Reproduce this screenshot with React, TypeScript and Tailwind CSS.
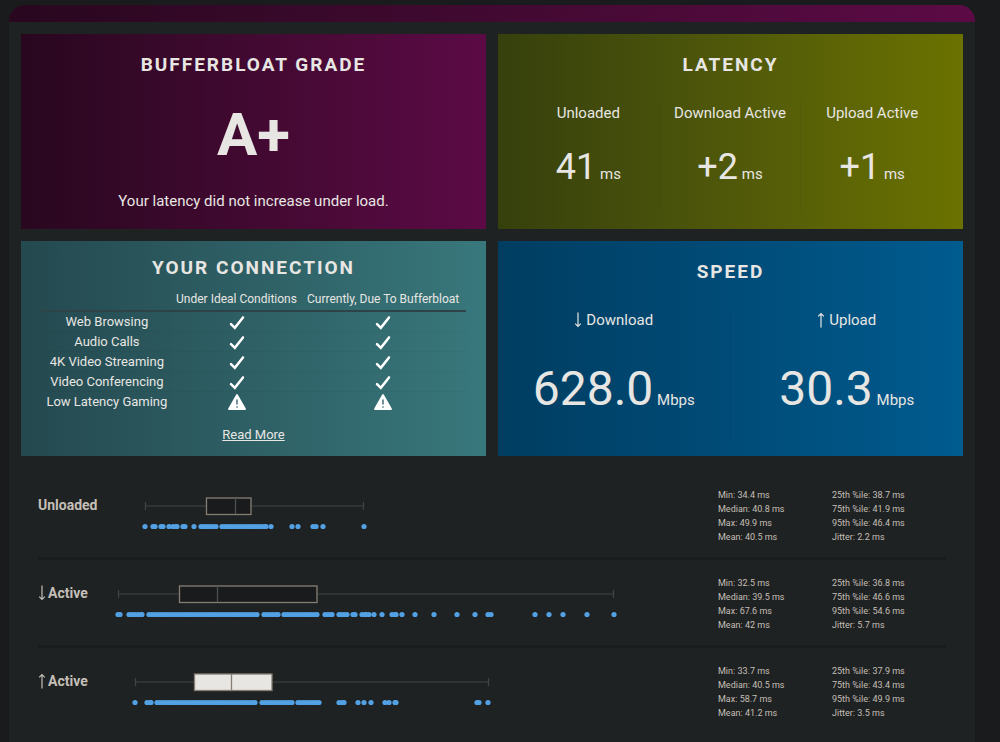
import type { ReactNode } from "react";

type Run = [number, number];

type Sample = {
  label: string;
  arrow?: "up" | "down";
  // chart coordinates
  whiskers: Run;
  box: Run;
  median: number;
  filled?: boolean;
  dots: Run[];
  stats: string[][];
};

const samples: Sample[] = [
  {
    label: "Unloaded",
    whiskers: [35, 253],
    box: [96, 141],
    median: 125,
    dots: [
      [35, 35], [43, 45], [51, 53], [59, 59], [63, 67], [73, 75], [84, 84],
      [91, 106], [112, 156], [161, 161], [182, 182], [188, 188], [203, 206],
      [213, 213], [254, 254],
    ],
    stats: [
      ["Min: 34.4 ms", "Median: 40.8 ms", "Max: 49.9 ms", "Mean: 40.5 ms"],
      ["25th %ile: 38.7 ms", "75th %ile: 41.9 ms", "95th %ile: 46.4 ms", "Jitter: 2.2 ms"],
    ],
  },
  {
    label: "Active",
    arrow: "down",
    whiskers: [8, 503],
    box: [69, 207],
    median: 107,
    dots: [
      [8, 10], [19, 32], [39, 147], [154, 168], [174, 207], [215, 222],
      [229, 231], [234, 237], [243, 245], [252, 256], [259, 259], [264, 264],
      [272, 272], [282, 286], [292, 292], [305, 305], [324, 324], [347, 347],
      [365, 365], [378, 381], [425, 425], [439, 439], [453, 453], [477, 477],
      [504, 504],
    ],
    stats: [
      ["Min: 32.5 ms", "Median: 39.5 ms", "Max: 67.6 ms", "Mean: 42 ms"],
      ["25th %ile: 36.8 ms", "75th %ile: 46.6 ms", "95th %ile: 54.6 ms", "Jitter: 5.7 ms"],
    ],
  },
  {
    label: "Active",
    arrow: "up",
    whiskers: [25, 378],
    box: [84, 162],
    median: 121,
    filled: true,
    dots: [
      [25, 25], [37, 41], [47, 145], [152, 182], [188, 188], [191, 209],
      [229, 234], [248, 248], [254, 254], [261, 261], [275, 275], [279, 279],
      [285, 286], [367, 369], [378, 378],
    ],
    stats: [
      ["Min: 33.7 ms", "Median: 40.5 ms", "Max: 58.7 ms", "Mean: 41.2 ms"],
      ["25th %ile: 37.9 ms", "75th %ile: 43.4 ms", "95th %ile: 49.9 ms", "Jitter: 3.5 ms"],
    ],
  },
];

const activities = [
  { name: "Web Browsing", ok: true },
  { name: "Audio Calls", ok: true },
  { name: "4K Video Streaming", ok: true },
  { name: "Video Conferencing", ok: true },
  { name: "Low Latency Gaming", ok: false },
];

function expand(runs: Run[]) {
  const xs: number[] = [];
  for (const [from, to] of runs) {
    for (let x = from; x < to; x += 3) xs.push(x);
    xs.push(to);
  }
  return xs;
}

function Arrow({ dir }: { dir: "up" | "down" }) {
  return (
    <svg
      viewBox="0 0 8 16"
      className={dir === "up" ? "h-4 w-2 shrink-0" : "h-4 w-2 shrink-0 rotate-180"}
      fill="none"
      stroke="currentColor"
      strokeWidth="1.2"
      aria-hidden="true"
    >
      <path d="M4 15.5V2M1.2 4.4 4 1.6l2.8 2.8" />
    </svg>
  );
}

function Check() {
  return (
    <svg
      viewBox="0 0 18 16"
      className="mx-auto h-4 w-[18px]"
      fill="none"
      stroke="#fff"
      strokeWidth="2.5"
      strokeLinecap="round"
      role="img"
      aria-label="Yes"
    >
      <path d="M3 10.2 6.8 13.8 15 3.4" />
    </svg>
  );
}

function Warning() {
  return (
    <svg viewBox="0 0 18 16" className="mx-auto h-4 w-[18px]" role="img" aria-label="Warning">
      <path
        d="M9 1 17 15H1Z"
        fill="#fff"
        stroke="#fff"
        strokeWidth="1.8"
        strokeLinejoin="round"
      />
      <path d="M9 5.6v5" stroke="#2b5a5f" strokeWidth="1.3" />
      <circle cx="9" cy="13" r="0.8" fill="#2b5a5f" />
    </svg>
  );
}

function Card({ className, title, children }: { className: string; title: string; children: ReactNode }) {
  return (
    <section className={`bg-linear-to-r text-center ${className}`}>
      <h2 className="text-[19px] leading-5 font-bold tracking-[2px] uppercase">{title}</h2>
      {children}
    </section>
  );
}

function BoxPlot({ sample }: { sample: Sample }) {
  const [min, max] = sample.whiskers;
  const [q1, q3] = sample.box;
  return (
    <svg viewBox="0 0 608 56" className="w-full" role="img" aria-label={`${sample.label} latency`}>
      <path
        d={`M${min} 18H${max}M${min}.5 14v8M${max}.5 14v8`}
        stroke="#414545"
        strokeWidth="1.2"
      />
      <rect
        x={q1 + 0.5}
        y="10"
        width={q3 - q1 - 0.5}
        height="16.5"
        fill={sample.filled ? "#e8e6e3" : "#1a1b1d"}
        stroke="#857e74"
        strokeWidth="1.3"
      />
      <path
        d={`M${sample.median}.5 10v16`}
        stroke={sample.filled ? "#857e74" : "#4b5151"}
        strokeWidth="1.3"
      />
      {expand(sample.dots).map((x) => (
        <circle key={x} cx={x} cy="38.5" r="2.6" fill="#52a1e5" />
      ))}
    </svg>
  );
}

export default function App() {
  return (
    <div className="flex min-h-screen flex-col bg-[#1a1b1d] pt-[5px] pr-[25px] pl-[9px] font-[Roboto,sans-serif] text-[#e8e6e3]">
      <main className="flex-1 overflow-hidden rounded-t-2xl bg-[#1f2222]">
        <div className="h-[17px] bg-linear-to-r from-[#29071f] to-[#5c0a45]" />

        <div className="grid grid-cols-2 gap-3 px-3 pt-3">
          <Card title="Bufferbloat Grade" className="from-[#29071f] to-[#5c0a45] px-5 pt-[21px] pb-4">
            <p className="mt-[30px] text-[60px] leading-[60px] font-bold">A+</p>
            <p className="mt-6 text-[15px] leading-6">Your latency did not increase under load.</p>
          </Card>

          <Card title="Latency" className="from-[#36400c] to-[#6b7200] px-5 pt-[21px] pb-4">
            <dl className="mt-7 grid grid-cols-3 divide-x divide-black/5">
              {[
                ["Unloaded", "41"],
                ["Download Active", "+2"],
                ["Upload Active", "+1"],
              ].map(([label, value]) => (
                <div key={label} className="pb-4 whitespace-nowrap">
                  <dt className="text-[15px] leading-5">{label}</dt>
                  <dd className="mt-6 text-[15px] leading-10">
                    <span className="text-4xl leading-10">{value}</span> ms
                  </dd>
                </div>
              ))}
            </dl>
          </Card>

          <Card title="Your Connection" className="from-[#24494f] to-[#38787c] px-5 pt-[17px] pb-2">
            <table className="mt-[9px] w-full table-fixed text-[13px]">
              <colgroup>
                <col className="w-[31%]" />
                <col className="w-[30%]" />
                <col className="w-[39%]" />
              </colgroup>
              <thead>
                <tr className="border-b-2 border-[#2e4347] text-xs whitespace-nowrap">
                  <td />
                  <th scope="col" className="h-6 p-0 font-normal">Under Ideal Conditions</th>
                  <th scope="col" className="h-6 p-0 font-normal">Currently, Due To Bufferbloat</th>
                </tr>
              </thead>
              <tbody>
                {activities.map((activity) => (
                  <tr key={activity.name} className="border-b border-black/3 last:border-0">
                    <th scope="row" className="p-0 leading-[19px] font-normal whitespace-nowrap">
                      {activity.name}
                    </th>
                    <td className="p-0">{activity.ok ? <Check /> : <Warning />}</td>
                    <td className="p-0">{activity.ok ? <Check /> : <Warning />}</td>
                  </tr>
                ))}
              </tbody>
            </table>
            <a href="#details" className="mx-auto mt-[14px] block w-fit text-[13px] leading-5 underline">
              Read More
            </a>
          </Card>

          <Card title="Speed" className="from-[#003d61] to-[#005b8f] pt-[21px] pb-4">
            <dl className="mt-7 grid grid-cols-2 divide-x divide-black/5">
              {[
                { label: "Download", value: "628.0", dir: "down" as const },
                { label: "Upload", value: "30.3", dir: "up" as const },
              ].map(({ label, value, dir }) => (
                <div key={label} className="pb-3 whitespace-nowrap">
                  <dt className="flex items-center justify-center gap-1 text-[15px] leading-5">
                    <Arrow dir={dir} />
                    {label}
                  </dt>
                  <dd className="mt-[31px] text-[15px] leading-[56px]">
                    <span className="text-5xl leading-[56px]">{value}</span> Mbps
                  </dd>
                </div>
              ))}
            </dl>
          </Card>
        </div>

        <div className="mt-4 divide-y-[3px] divide-[#1a1b1d] px-[29px] text-[#c4bfb7]">
          {samples.map((sample) => (
            <div
              key={`${sample.label}-${sample.arrow}`}
              className="grid grid-cols-[72px_1fr_114px_114px] pt-4 pb-[13px]"
            >
              <h3 className="flex h-[34px] items-center gap-0.5 text-sm font-bold">
                {sample.arrow && <Arrow dir={sample.arrow} />}
                {sample.label}
              </h3>
              <BoxPlot sample={sample} />
              {sample.stats.map((column) => (
                <ul key={column[0]} className="text-[9px] leading-[14px] whitespace-nowrap">
                  {column.map((line) => (
                    <li key={line}>{line}</li>
                  ))}
                </ul>
              ))}
            </div>
          ))}
        </div>
      </main>
    </div>
  );
}
